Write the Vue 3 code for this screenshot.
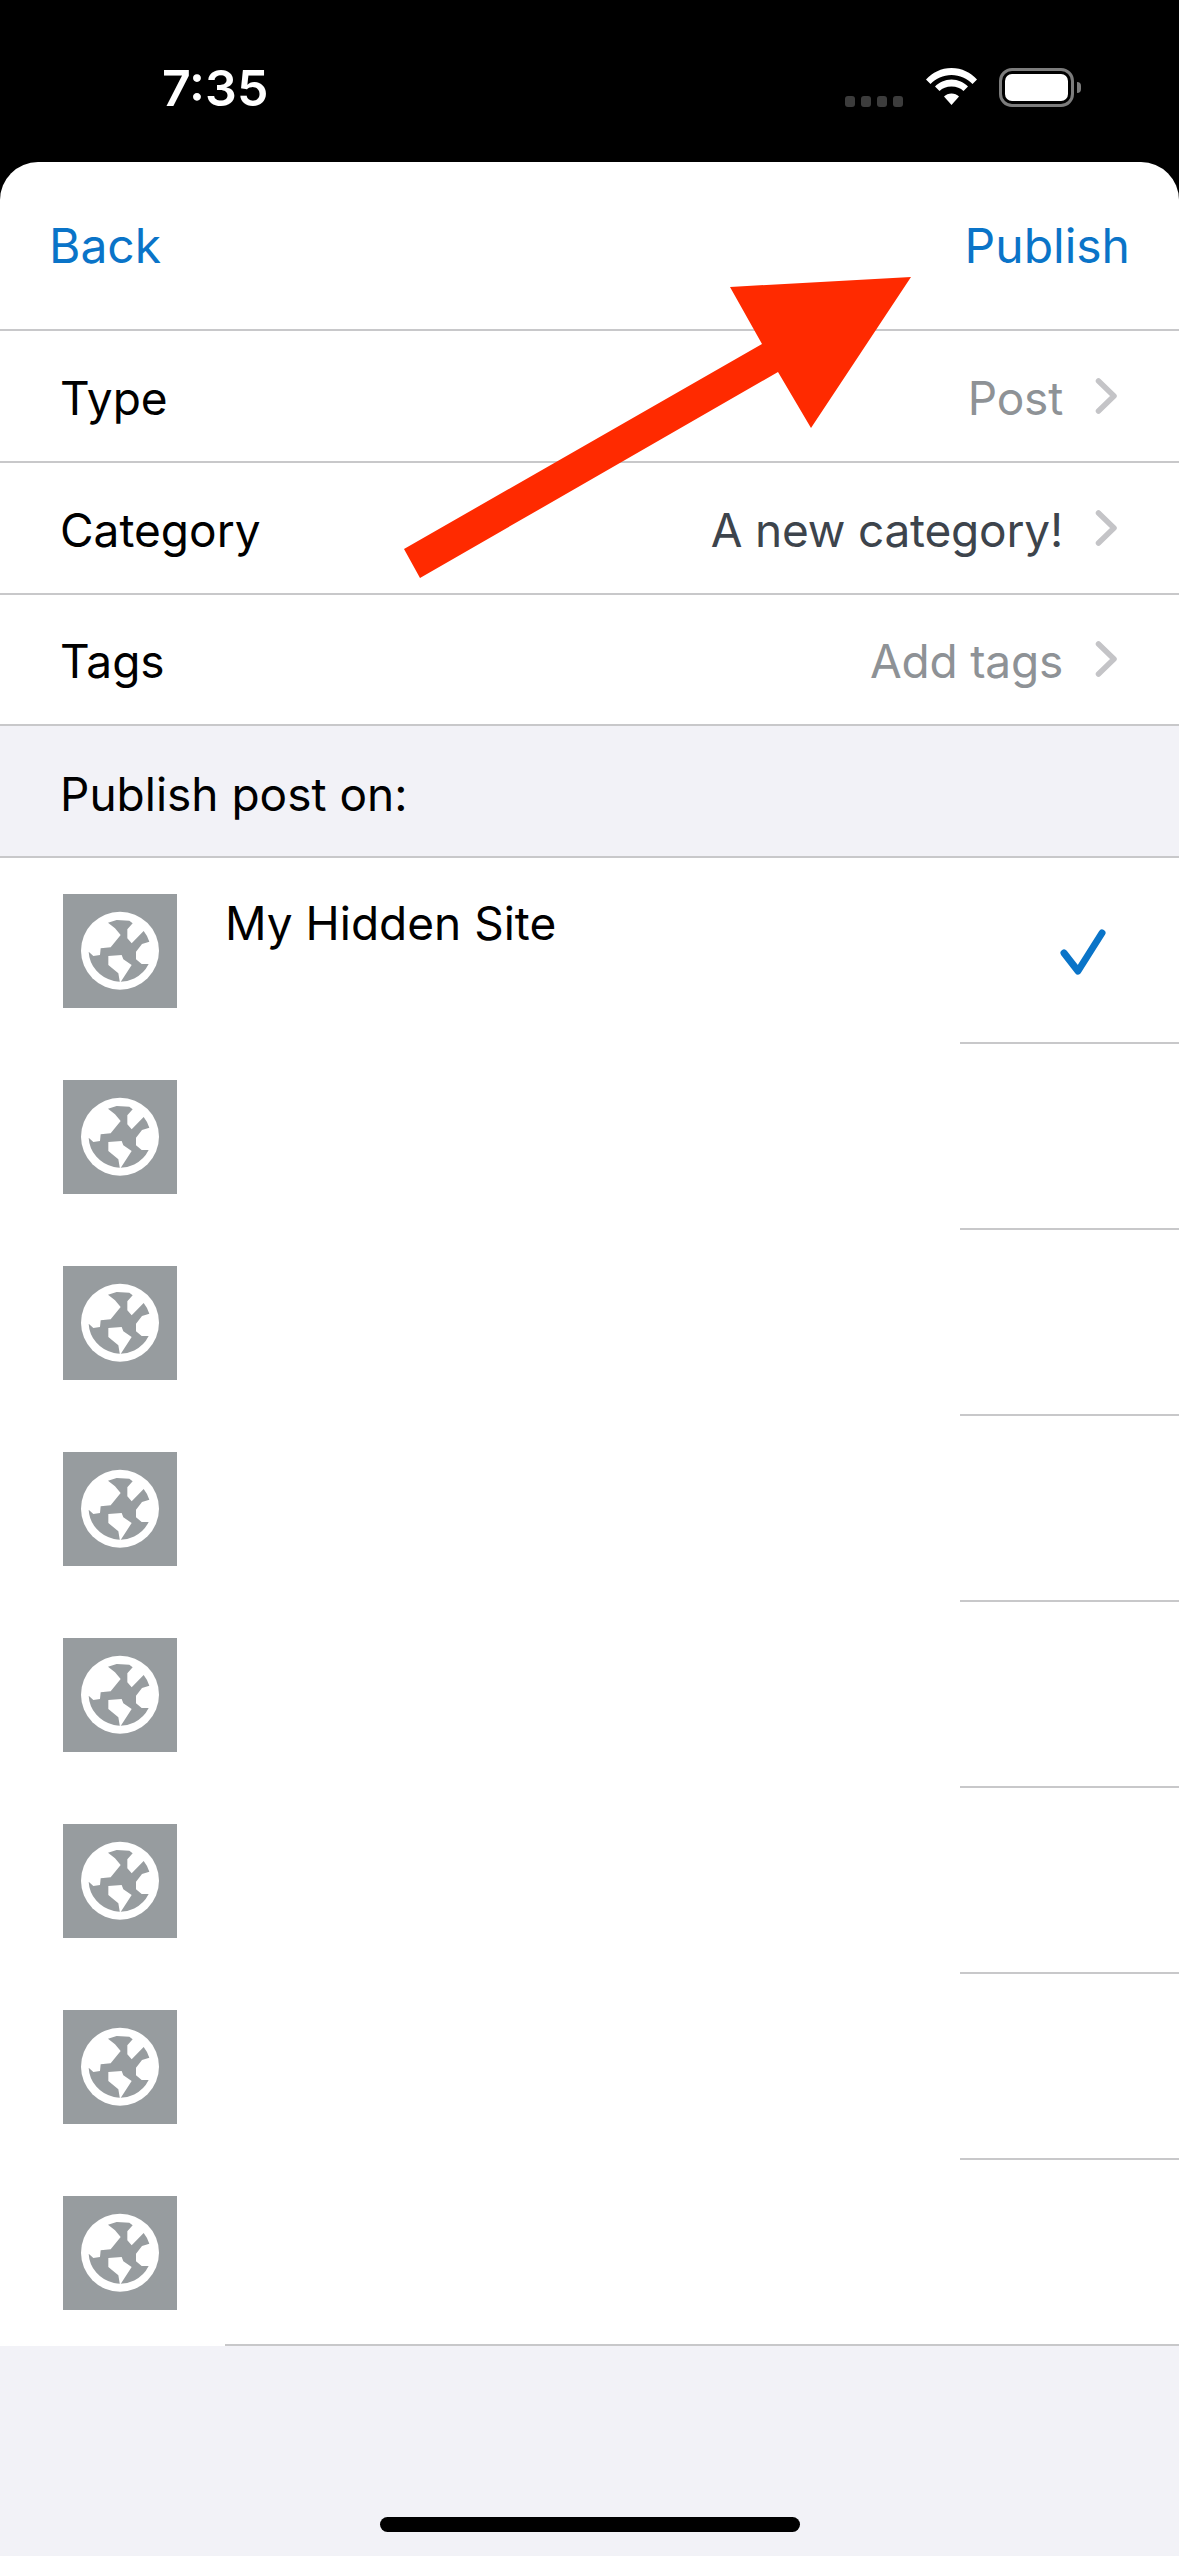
<template>
  <div class="screen">
    <header class="status-bar">
      <span class="time">7:35</span>
      <div class="status-icons">
        <div class="signal">
          <i v-for="n in 4" :key="n"></i>
        </div>
        <svg class="wifi" width="51" height="37" viewBox="0 0 51 37">
          <path d="M0 15.500C6.500 8.500 15 4 25.500 4S44.500 8.500 51 15.500L46.500 20C41 14.500 34 11 25.500 11S10 14.500 4.500 20Z" fill="#fff" transform="translate(0 -4)" />
          <path d="M9 20.500C13 16.500 19 13.500 25.500 13.500S38 16.500 42 20.500L37.500 25C34.500 22 30.500 20.500 25.500 20.500S16.500 22 13.500 25Z" fill="#fff" transform="translate(0 -2)" />
          <path d="M18 28.500C20 26.500 22.500 25.500 25.500 25.500S31 26.500 33 28.500L25.500 37Z" fill="#fff" />
        </svg>
        <div class="battery">
          <div class="battery-body"><div class="battery-fill"></div></div>
          <div class="battery-nub"></div>
        </div>
      </div>
    </header>

    <main class="sheet">
      <nav class="nav-bar">
        <span class="nav-link">Back</span>
        <span class="nav-link">Publish</span>
      </nav>

      <div v-for="row in settings" :key="row.label" class="setting-row">
        <span class="setting-label">{{ row.label }}</span>
        <span class="setting-value" :class="row.tone">{{ row.value }}</span>
        <svg class="chevron" width="22" height="36" viewBox="0 0 22 36">
          <path d="M3.500 3L19 18L3.500 33" fill="none" stroke="#c4c4c7" stroke-width="5.500" stroke-linecap="round" stroke-linejoin="round" />
        </svg>
      </div>

      <div class="section-title">Publish post on:</div>

      <div class="site-list">
        <div v-for="(site, i) in sites" :key="i" class="site-row" :class="{ last: i === sites.length - 1 }">
          <svg class="site-icon" width="114" height="114" viewBox="0 0 342 342">
            <rect width="342" height="342" fill="#979c9f" />
            <circle cx="171" cy="170" r="117" fill="#fff" />
            <path
              d="M135 86L161 78L199 80L209 88L193 106V133L206 148L242 111A95 95 0 0 1 259 143L237 150L219 173V196L236 210L257 210A95 95 0 0 1 77 173L91 186L111 183L113 163L143 160L173 123L156 103Z"
              fill="#979c9f"
            />
            <polygon points="136,186 176,183 181,196 206,213 171,267 166,238 136,213" fill="#fff" />
          </svg>
          <span class="site-name">{{ site }}</span>
          <svg v-if="site" class="check" width="47" height="49" viewBox="0 0 47 49">
            <path d="M4 24L18 42L42 4" fill="none" stroke="#0a74c8" stroke-width="7" stroke-linecap="round" stroke-linejoin="round" />
          </svg>
        </div>
      </div>

      <div class="footer">
        <div class="home-indicator"></div>
      </div>

      <svg class="arrow" width="1179" height="2556" viewBox="0 0 1179 2556">
        <polygon points="730,287 911,277 811,428 778,372 420,578 404,549 762,344" fill="#ff2a00" />
      </svg>
    </main>
  </div>
</template>

<script setup>
const settings = [
  { label: 'Type', value: 'Post', tone: 'muted' },
  { label: 'Category', value: 'A new category!', tone: 'dark' },
  { label: 'Tags', value: 'Add tags', tone: 'muted' }
]

const sites = ['My Hidden Site', '', '', '', '', '', '', '']
</script>

<style>
html, body {
  margin: 0;
  background: #000;
}
</style>

<style scoped>
.screen {
  width: 1179px;
  height: 2556px;
  display: flex;
  flex-direction: column;
  background: #000;
  font-family: Inter, "Liberation Sans", sans-serif;
  font-size: 46px;
  color: #000;
  overflow: hidden;
}

.status-bar {
  height: 162px;
  flex: none;
  display: flex;
  justify-content: space-between;
  align-items: flex-start;
  padding: 0 98px 0 162px;
  box-sizing: border-box;
}

.time {
  margin-top: 58px;
  font-size: 50px;
  line-height: 60px;
  font-weight: 600;
  color: #fff;
}

.status-icons {
  display: flex;
  align-items: flex-start;
  margin-top: 68px;
}

.signal {
  display: flex;
  gap: 6px;
  margin-top: 28px;
  margin-right: 23px;
}

.signal i {
  width: 10px;
  height: 11px;
  border-radius: 3px;
  background: #3c3c3c;
}

.wifi {
  margin-right: 22px;
}

.battery {
  display: flex;
  align-items: center;
  gap: 3px;
}

.battery-body {
  width: 75px;
  height: 39px;
  box-sizing: border-box;
  border: 3px solid #7c7c7c;
  border-radius: 13px;
  padding: 3px;
}

.battery-fill {
  height: 100%;
  border-radius: 7px;
  background: #fff;
}

.battery-nub {
  width: 4px;
  height: 11px;
  border-radius: 0 5px 5px 0;
  background: #7c7c7c;
}

.sheet {
  position: relative;
  flex: 1;
  display: flex;
  flex-direction: column;
  background: #fff;
  border-radius: 38px 38px 0 0;
  overflow: hidden;
}

.nav-bar {
  height: 169px;
  flex: none;
  display: flex;
  justify-content: space-between;
  align-items: center;
  padding: 0 49px;
  box-sizing: border-box;
  border-bottom: 2px solid #c8c8ca;
}

.nav-link {
  font-size: 48px;
  color: #0a74c8;
}

.setting-row {
  height: 131.75px;
  flex: none;
  display: flex;
  align-items: center;
  padding: 4px 62px 0 60px;
  box-sizing: border-box;
  border-bottom: 2px solid #c8c8ca;
}

.setting-label {
  flex: 1;
}

.setting-value {
  margin-right: 32px;
  letter-spacing: -0.2px;
}

.chevron {
  margin-top: -4px;
}

.muted {
  color: #8e9296;
}

.dark {
  color: #3d444c;
}

.section-title {
  height: 131.75px;
  flex: none;
  display: flex;
  align-items: center;
  padding: 5px 0 0 60px;
  box-sizing: border-box;
  background: #f2f2f7;
  border-bottom: 2px solid #c8c8ca;
}

.site-row {
  position: relative;
  height: 186px;
  display: flex;
  align-items: flex-start;
  box-sizing: border-box;
  padding: 36px 0 0 63px;
}

.site-row::after {
  content: "";
  position: absolute;
  left: 960px;
  right: 0;
  bottom: 0;
  height: 2px;
  background: #c8c8ca;
}

.site-row.last::after {
  left: 225px;
}

.site-icon {
  flex: none;
}

.site-name {
  margin-left: 48px;
  line-height: 58px;
}

.check {
  position: absolute;
  left: 1060px;
  top: 71px;
}

.footer {
  flex: 1;
  display: flex;
  justify-content: center;
  align-items: flex-end;
  padding-bottom: 24px;
  background: #f2f2f7;
}

.home-indicator {
  width: 420px;
  height: 15px;
  border-radius: 8px;
  background: #000;
}

.arrow {
  position: absolute;
  left: 0;
  top: -162px;
  pointer-events: none;
}
</style>
